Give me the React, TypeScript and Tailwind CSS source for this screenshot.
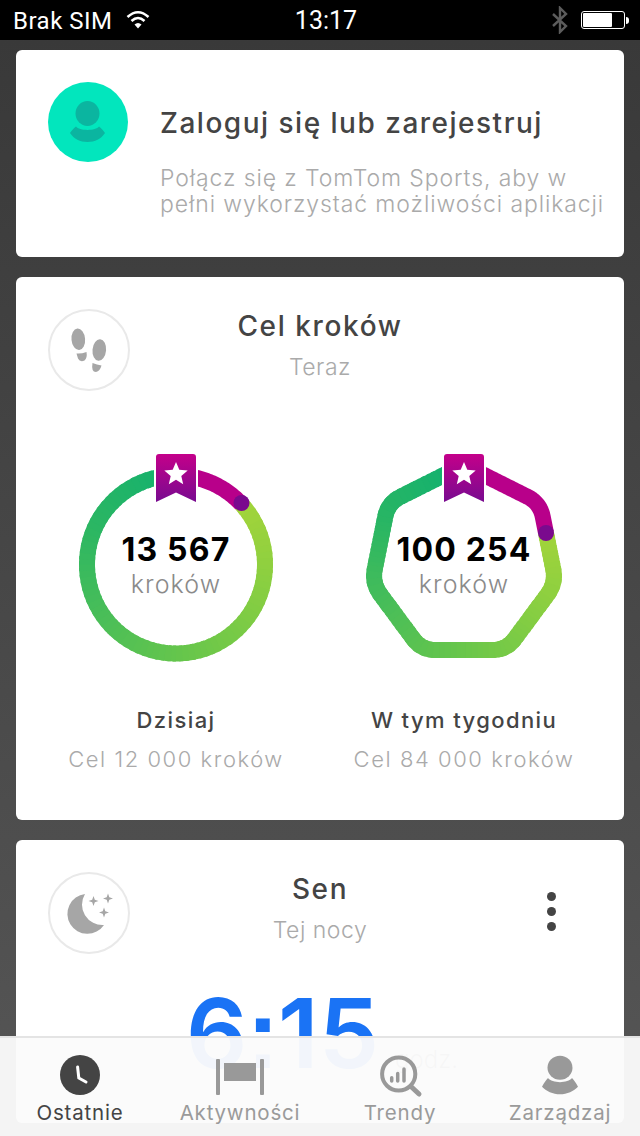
import React from "react";

type P = [number, number];
const hex = (h: string) => [1, 3, 5].map((i) => parseInt(h.slice(i, i + 2), 16));
const mix = (stops: string[], t: number) => {
  const s = Math.min(Math.max(t, 0), 0.9999) * (stops.length - 1);
  const i = Math.floor(s);
  const a = hex(stops[i]);
  const b = hex(stops[i + 1]);
  const c = a.map((v, k) => Math.round(v + (b[k] - v) * (s - i)));
  return `rgb(${c[0]},${c[1]},${c[2]})`;
};
const GREEN = ["#a2d43a", "#86ce42", "#68c64b", "#4abe58", "#2bb663", "#14b16e"];

function circlePts(cx: number, cy: number, r: number): P[] {
  const out: P[] = [];
  for (let i = 0; i <= 360; i++) {
    const a = (i * Math.PI) / 180;
    out.push([cx + r * Math.sin(a), cy - r * Math.cos(a)]);
  }
  return out;
}

function polyPts(v: P[], r: number): P[] {
  const out: P[] = [];
  const n = v.length;
  const lerp = (a: P, b: P, t: number): P => [a[0] + (b[0] - a[0]) * t, a[1] + (b[1] - a[1]) * t];
  const toward = (a: P, b: P, d: number) => lerp(a, b, d / Math.hypot(b[0] - a[0], b[1] - a[1]));
  for (let i = 0; i <= n; i++) {
    const p = v[i % n];
    const prev = v[(i + n - 1) % n];
    const next = v[(i + 1) % n];
    const a = toward(p, prev, r);
    const b = toward(p, next, r);
    if (i < n) {
      for (let k = 0; k <= 12; k++) {
        const t = k / 12;
        out.push(lerp(lerp(a, p, t), lerp(p, b, t), t));
      }
      const c = v[(i + 1) % n];
      const e = toward(c, p, r);
      for (let k = 1; k < 30; k++) out.push(lerp(b, e, k / 30));
    }
  }
  return out;
}

function Ring({ pts, dot, ox, oy, mark }: { pts: P[]; dot: P; ox: number; oy: number; mark: number }) {
  let split = 0;
  let best = 1e9;
  pts.forEach((p, i) => {
    const d = Math.hypot(p[0] - dot[0], p[1] - dot[1]);
    if (d < best) {
      best = d;
      split = i;
    }
  });
  const rest = pts.slice(split);
  const n = 80;
  const segs = [];
  for (let i = 0; i < n; i++) {
    const a = Math.floor((i / n) * (rest.length - 1));
    const b = Math.min(rest.length - 1, Math.floor(((i + 1) / n) * (rest.length - 1)) + 2);
    segs.push(
      <polyline
        key={i}
        points={rest.slice(a, b + 1).map((p) => p.join(",")).join(" ")}
        fill="none"
        stroke={mix(GREEN, i / (n - 1))}
        strokeWidth={16}
      />
    );
  }
  const m = mark;
  return (
    <svg width={220} height={220} viewBox={`${ox} ${oy} 220 220`} className="block">
      {segs}
      <polyline
        points={pts.slice(0, split + 1).map((p) => p.join(",")).join(" ")}
        fill="none"
        stroke="#b8008a"
        strokeWidth={16}
        strokeLinejoin="round"
      />
      <circle cx={dot[0]} cy={dot[1]} r={8} fill="#7a0a8e" />
      <rect x={m - 22} y={454} width={44} height={52} fill="#fff" />
      <defs>
        <linearGradient id={`bm${m}`} x1="0" y1="0" x2="0" y2="1">
          <stop offset="0" stopColor="#c4008a" />
          <stop offset="1" stopColor="#780b90" />
        </linearGradient>
      </defs>
      <path
        d={`M${m - 20} 457 a3 3 0 0 1 3 -3 h34 a3 3 0 0 1 3 3 v45 l-20 -9.5 l-20 9.5 z`}
        fill={`url(#bm${m})`}
      />
      <path
        d={`M${m} 462 l3.3 7.8 l8.4 .7 l-6.4 5.5 l1.9 8.2 l-7.2 -4.4 l-7.2 4.4 l1.9 -8.2 l-6.4 -5.5 l8.4 -.7 z`}
        fill="#fff"
      />
    </svg>
  );
}

const IconCircle = ({ children }: { children: React.ReactNode }) => (
  <div className="w-[82px] h-[82px] rounded-full border-2 border-[#e9e9e9]">
    <svg width={78} height={78} viewBox="2 2 78 78" className="block">
      {children}
    </svg>
  </div>
);

const Feet = () => (
  <IconCircle>
    <g fill="#a6a6a6">
      <ellipse cx={30.3} cy={30.3} rx={6.8} ry={10.8} transform="rotate(-5 30.3 30.3)" />
      <path d="M28.5 44.5 Q33 45 38.5 43 Q39.5 49 36.5 51.5 Q32 53.5 30 49.5 Z" />
      <ellipse cx={51.3} cy={41} rx={6.8} ry={10.8} transform="rotate(5 51.3 41)" />
      <path d="M44.5 54 Q49 55.5 53.5 56.5 Q52 62 48 63 Q43 63 44.5 54 Z" />
    </g>
  </IconCircle>
);

const Star4 = ({ x, y, r }: { x: number; y: number; r: number }) => (
  <path
    d={`M${x} ${y - r} L${x + 1.3} ${y - 1.3} L${x + r} ${y} L${x + 1.3} ${y + 1.3} L${x} ${y + r} L${x - 1.3} ${y + 1.3} L${x - r} ${y} L${x - 1.3} ${y - 1.3} Z`}
  />
);

const Moon = () => (
  <IconCircle>
    <g fill="#a6a6a6">
      <path d="M37 22 A20 20 0 1 0 56 53 A20.4 20.4 0 0 1 37 22 Z" />
      <Star4 x={45.5} y={29} r={5} />
      <Star4 x={60} y={26.5} r={5} />
      <Star4 x={56} y={40.5} r={5} />
    </g>
  </IconCircle>
);

const Stat = ({ value, title, goal, pts, dot, ox, mark }: { value: string; title: string; goal: string; pts: P[]; dot: P; ox: number; mark: number }) => (
  <div className="flex flex-col items-center w-[220px]">
    <div className="relative w-[220px] h-[220px]">
      <Ring pts={pts} dot={dot} ox={ox} oy={450} mark={mark} />
      <div className="absolute left-0 right-0 top-[82px] flex flex-col items-center">
        <div className="text-[32px] leading-[36px] font-bold text-black tracking-[1.2px]">{value}</div>
        <div className="text-[25px] leading-[36px] font-light text-[#8a8a8a] tracking-[1.1px] -mt-[2px]">kroków</div>
      </div>
    </div>
    <div className="mt-[36px] text-[22px] leading-[28px] font-medium text-[#444] tracking-[1.4px] whitespace-nowrap">{title}</div>
    <div className="mt-[11px] text-[22px] leading-[28px] text-[#aaaaaa] font-light tracking-[1.55px] whitespace-nowrap">{goal}</div>
  </div>
);

const Tab = ({ label, active, children }: { label: string; active?: boolean; children: React.ReactNode }) => (
  <div className="flex flex-col items-center">
    <svg width={160} height={48} viewBox="0 0 160 48" className="block">
      {children}
    </svg>
    <div className={`text-[20.5px] leading-[24px] mt-[3px] tracking-[0.8px] ${active ? "text-[#444]" : "text-[#9a9a9a]"}`}>{label}</div>
  </div>
);

export default function App() {
  const ring1 = circlePts(176, 564.5, 89);
  const ring2 = polyPts(
    [
      [464, 465],
      [540, 503],
      [556, 583],
      [506.5, 650],
      [421.5, 650],
      [372, 583],
      [388, 503],
    ],
    14
  );
  return (
    <div className="relative w-[640px] h-[1136px] overflow-hidden bg-gradient-to-b from-[#383838] to-[#565656] font-['Inter',sans-serif]">
      <div className="h-[40px] bg-black text-white flex items-center justify-between pl-[13px] pr-[11px] font-['Roboto',sans-serif]">
        <div className="flex items-center gap-[13px] w-[225px] text-[24px] tracking-[0.5px]">
          <span className="pt-[2px]">Brak SIM</span>
          <svg width={24} height={20} viewBox="0 0 24 20" fill="none" stroke="#fff" strokeWidth={2.6}>
            <path d="M1.5 7 Q12 -2.5 22.5 7" />
            <path d="M5.5 11 Q12 5 18.5 11" />
            <path d="M12 18.5 L8.5 14.5 Q12 11.5 15.5 14.5 Z" fill="#fff" stroke="none" />
          </svg>
        </div>
        <span className="text-[25px] pt-[2px]">13:17</span>
        <div className="flex items-center justify-end gap-[12px] w-[215px]">
          <svg width={18} height={28} viewBox="0 0 18 28" fill="none" stroke="#5c5c5c" strokeWidth={2.4}>
            <path d="M2 8 L15 20 L9 26 V2 L15 8 L2 20" />
          </svg>
          <div className="flex items-center">
            <div className="w-[44px] h-[18px] rounded-[3px] border border-white p-[1px]">
              <div className="w-[29px] h-full bg-white rounded-[1px]" />
            </div>
            <div className="w-[3px] h-[7px] ml-[1px] bg-white rounded-r-sm" />
          </div>
        </div>
      </div>

      <div className="px-[16px] pt-[10px] flex flex-col gap-[20px]">
        <div className="h-[207px] bg-white rounded-[6px] flex pl-[32px] pr-[16px] pt-[32px]">
          <svg width={80} height={80} viewBox="48 82 80 80" className="shrink-0 block">
            <circle cx={88} cy={122} r={40} fill="#02e6bd" />
            <ellipse cx={87.5} cy={113.5} rx={12} ry={12.5} fill="#0bb5a0" />
            <path d="M70 133 C72 130 74 128 76 126.5 C79 131 96 131 99 126.5 C101 128 103 130 105 133 C101 139 95 142 87.5 142 C80 142 74 139 70 133 Z" fill="#0bb5a0" />
          </svg>
          <div className="ml-[33px] pt-[22px] -translate-x-px">
            <div className="text-[28px] leading-[38px] font-medium text-[#444] tracking-[1.5px] whitespace-nowrap">Zaloguj się lub zarejestruj</div>
            <div className="mt-[23px] text-[23px] leading-[26px] text-[#aaaaaa] font-light tracking-[0.9px] whitespace-nowrap">
              Połącz się z TomTom Sports, aby w
              <br />
              pełni wykorzystać możliwości aplikacji
            </div>
          </div>
        </div>

        <div className="h-[543px] bg-white rounded-[6px] px-[32px] pt-[32px]">
          <div className="grid grid-cols-[82px_1fr_82px]">
            <Feet />
            <div className="flex flex-col items-center">
              <div className="text-[28px] leading-[34px] font-medium text-[#444] tracking-[1.6px]">Cel kroków</div>
              <div className="mt-[8px] text-[23px] leading-[32px] font-light text-[#aaaaaa] tracking-[0.5px]">Teraz</div>
            </div>
            <div />
          </div>
          <div className="flex gap-[68px] mt-[59px] ml-[18px]">
            <Stat value="13 567" title="Dzisiaj" goal="Cel 12 000 kroków" pts={ring1} dot={[241.5, 503]} ox={66} mark={176} />
            <Stat value="100 254" title="W tym tygodniu" goal="Cel 84 000 kroków" pts={ring2} dot={[546, 533]} ox={354} mark={464} />
          </div>
        </div>

        <div className="h-[283px] bg-white rounded-[6px] px-[32px] pt-[32px]">
          <div className="grid grid-cols-[82px_1fr_82px]">
            <Moon />
            <div className="flex flex-col items-center">
              <div className="text-[28px] leading-[34px] font-medium text-[#444] tracking-[1.6px]">Sen</div>
              <div className="mt-[8px] text-[23px] leading-[32px] font-light text-[#aaaaaa] tracking-[0.5px]">Tej nocy</div>
            </div>
            <div className="flex flex-col items-center gap-[6px] pt-[20px]">
              <span className="w-[9px] h-[9px] rounded-full bg-[#444]" />
              <span className="w-[9px] h-[9px] rounded-full bg-[#444]" />
              <span className="w-[9px] h-[9px] rounded-full bg-[#444]" />
            </div>
          </div>
          <div className="flex items-baseline mt-[20px] ml-[138px]">
            <span className="text-[96px] leading-[118px] font-semibold text-[#1a73f5]">
              6<span className="font-['Liberation_Sans',sans-serif] font-bold text-[98px] -mx-[1px]">:</span>15
            </span>
            <span className="ml-[16px] text-[24px] font-light text-[#888]">godz.</span>
          </div>
        </div>
      </div>

      <div className="absolute left-0 right-0 bottom-0 h-[100px] bg-[#fbfbfb]/[0.96] border-t-2 border-[#e4e4e4] grid grid-cols-4 pt-[12px]">
        <Tab label="Ostatnie" active>
          <circle cx={80} cy={25} r={20} fill="#444" />
          <path d="M77.6 17 L78.8 28 L86 32" fill="none" stroke="#fff" strokeWidth={3} strokeLinecap="round" strokeLinejoin="round" />
        </Tab>
        <Tab label="Aktywności">
          <rect x={56} y={9} width={4} height={36} rx={1} fill="#999" />
          <rect x={100} y={9} width={4} height={36} rx={1} fill="#999" />
          <rect x={64} y={13} width={32} height={18} fill="#999" />
        </Tab>
        <Tab label="Trendy">
          <circle cx={78.7} cy={24} r={16.6} fill="none" stroke="#999" strokeWidth={4} />
          <path d="M91.5 37 L99 44" stroke="#999" strokeWidth={5} strokeLinecap="round" />
          <path d="M71.7 27.7 V31 M77.7 23.4 V31 M84 19 V31" stroke="#999" strokeWidth={3.5} strokeLinecap="round" />
        </Tab>
        <Tab label="Zarządzaj">
          <ellipse cx={80} cy={17.7} rx={12.5} ry={12} fill="#999" />
          <path d="M62 36.7 C64 33 66 30 68 28 C72 33.5 88 33.5 92 28 C94 30 96 33 98 36.7 C94 41 87 44.3 80 44.3 C73 44.3 66 41 62 36.7 Z" fill="#999" />
        </Tab>
      </div>
    </div>
  );
}
